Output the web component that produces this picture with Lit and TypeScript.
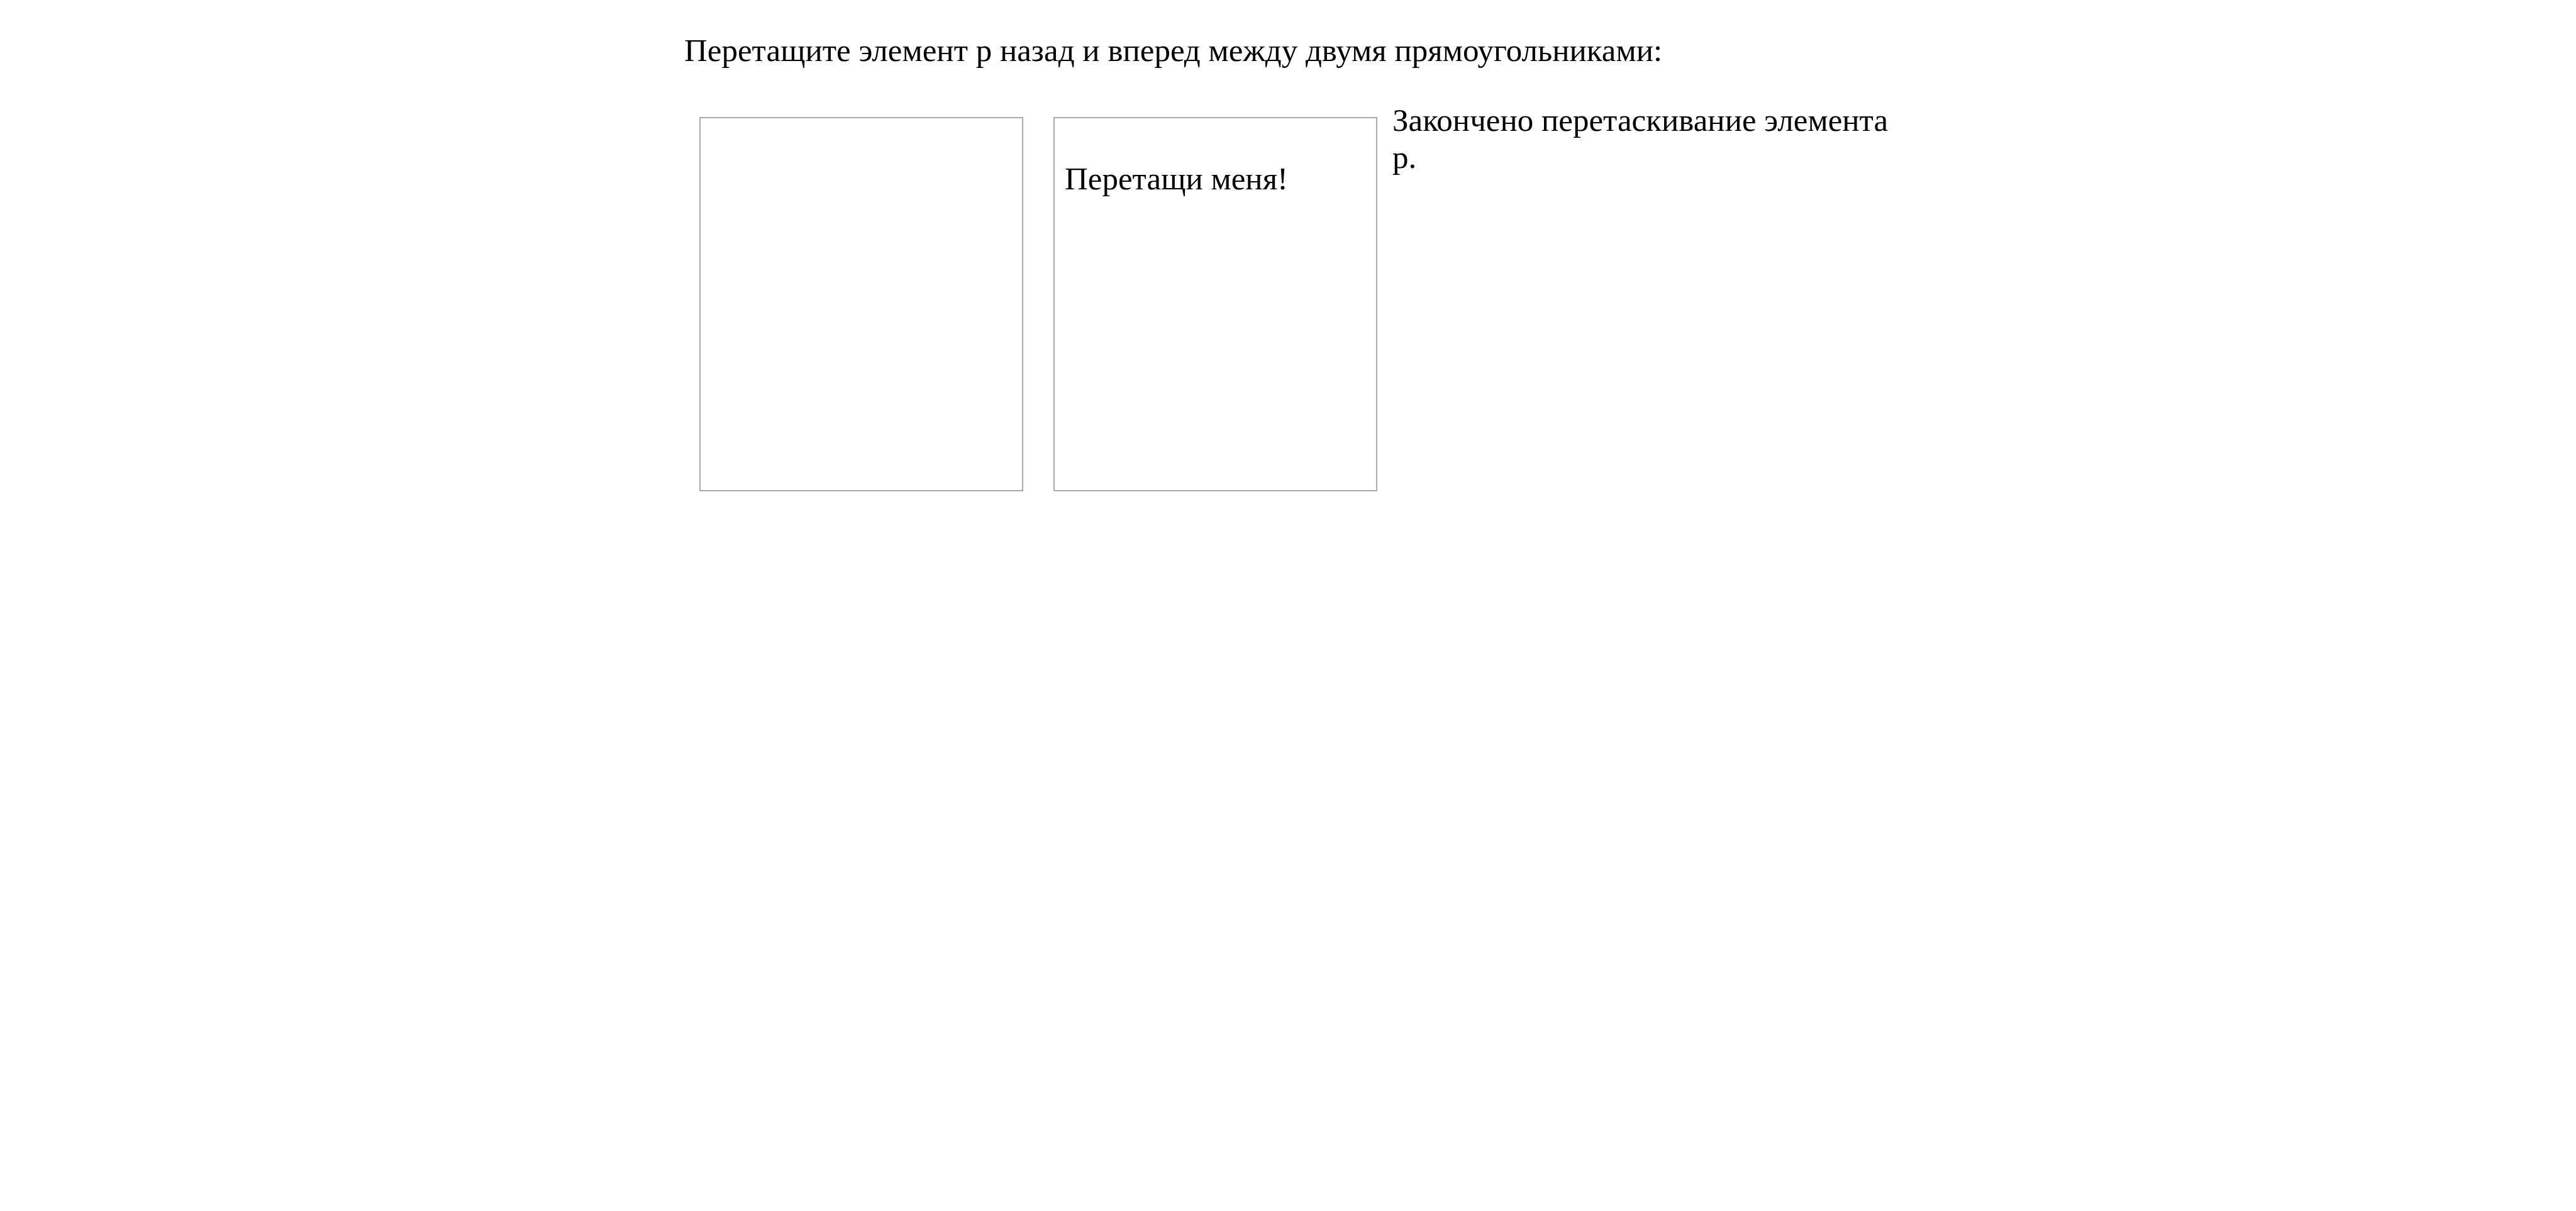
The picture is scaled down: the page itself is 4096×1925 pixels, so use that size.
import { LitElement, html, css, nothing } from "lit";
import { customElement, state } from "lit/decorators.js";

@customElement("app-root")
export class AppRoot extends LitElement {
  static styles = css`
    :host {
      display: block;
      min-height: 100vh;
      background: #fff;
      color: #000;
      font-family: "Liberation Serif", "Times New Roman", serif;
      font-size: 51px;
      line-height: 59px;
    }
    .page {
      max-width: 1920px;
      margin: 0 auto;
      padding-top: 51px;
    }
    .intro {
      margin: 0 0 52px;
    }
    .board {
      display: flex;
      align-items: flex-start;
    }
    .target {
      box-sizing: border-box;
      flex: 0 1 515px;
      min-height: 595px;
      margin: 24px;
      padding: 16px;
      border: 2px solid #aaa;
    }
    .item {
      margin: 51px 0;
      cursor: grab;
    }
    .status {
      flex: 1;
      min-width: 0;
      margin: 0;
    }
  `;

  @state() private holder = 1;
  @state() private status = "Закончено перетаскивание элемента p.";

  private start(e: DragEvent) {
    e.dataTransfer?.setData("text/plain", "item");
    this.status = "Начато перетаскивание элемента p.";
  }

  private end() {
    this.status = "Закончено перетаскивание элемента p.";
  }

  private drop(e: DragEvent, index: number) {
    e.preventDefault();
    this.holder = index;
  }

  private renderTarget(index: number) {
    return html`
      <div
        class="target"
        @dragover=${(e: DragEvent) => e.preventDefault()}
        @drop=${(e: DragEvent) => this.drop(e, index)}
      >
        ${this.holder === index
          ? html`<p class="item" draggable="true" @dragstart=${this.start} @dragend=${this.end}>Перетащи меня!</p>`
          : nothing}
      </div>
    `;
  }

  render() {
    return html`
      <main class="page">
        <p class="intro">Перетащите элемент p назад и вперед между двумя прямоугольниками:</p>
        <div class="board">
          ${[0, 1].map((i) => this.renderTarget(i))}
          <p class="status" role="status">${this.status}</p>
        </div>
      </main>
    `;
  }
}
